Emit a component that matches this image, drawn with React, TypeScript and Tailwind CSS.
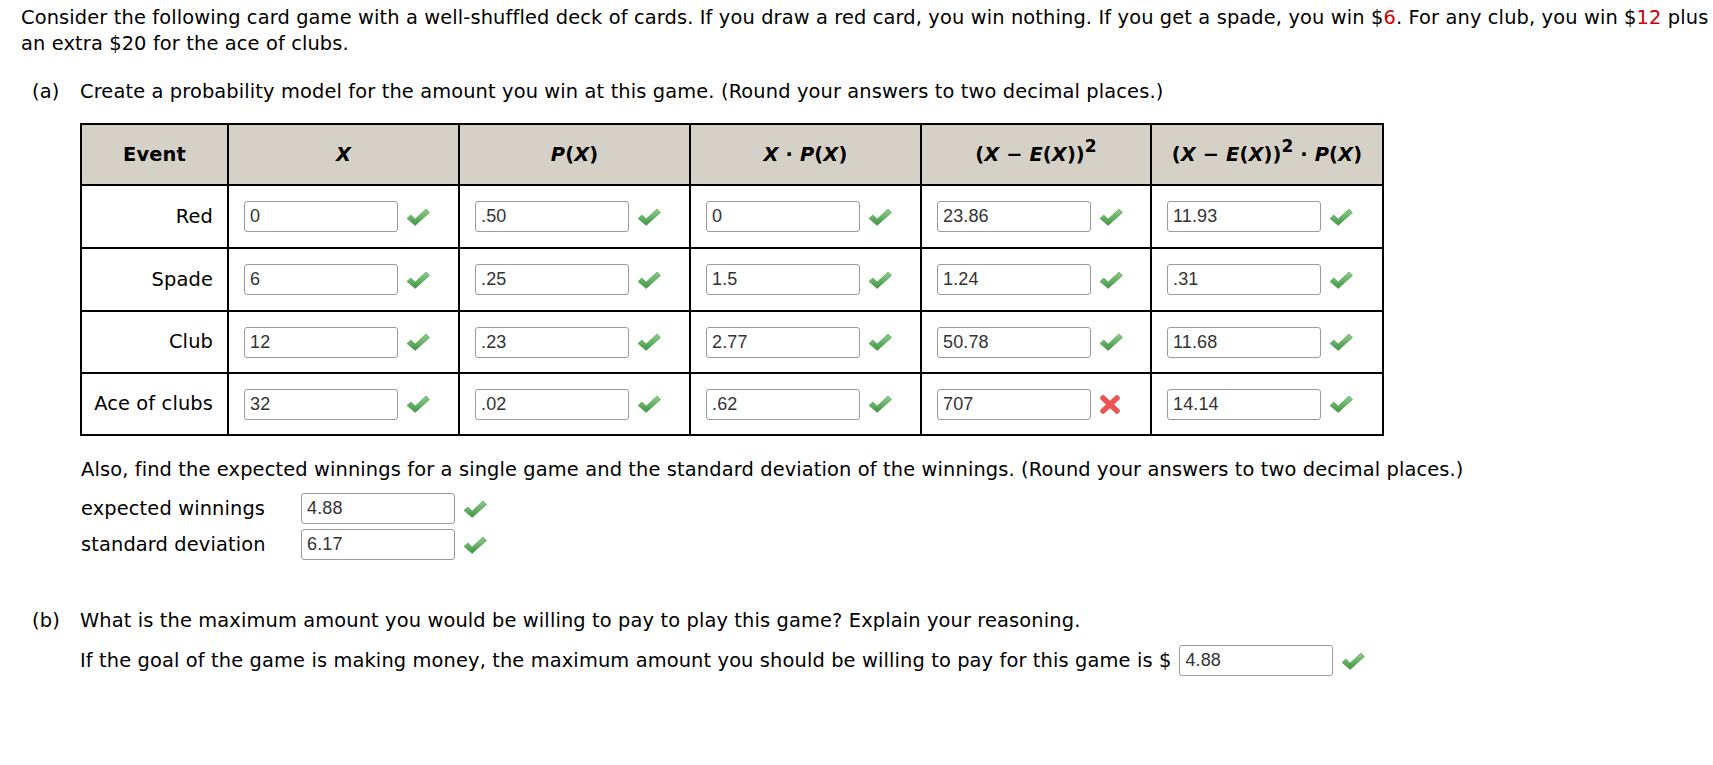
import React from "react";

type Cell = { value: string; ok: boolean };

const rows: { event: string; height: string; cells: Cell[] }[] = [
  {
    event: "Red",
    height: "h-[63px]",
    cells: [
      { value: "0", ok: true },
      { value: ".50", ok: true },
      { value: "0", ok: true },
      { value: "23.86", ok: true },
      { value: "11.93", ok: true },
    ],
  },
  {
    event: "Spade",
    height: "h-[63px]",
    cells: [
      { value: "6", ok: true },
      { value: ".25", ok: true },
      { value: "1.5", ok: true },
      { value: "1.24", ok: true },
      { value: ".31", ok: true },
    ],
  },
  {
    event: "Club",
    height: "h-[62px]",
    cells: [
      { value: "12", ok: true },
      { value: ".23", ok: true },
      { value: "2.77", ok: true },
      { value: "50.78", ok: true },
      { value: "11.68", ok: true },
    ],
  },
  {
    event: "Ace of clubs",
    height: "h-[62px]",
    cells: [
      { value: "32", ok: true },
      { value: ".02", ok: true },
      { value: ".62", ok: true },
      { value: "707", ok: false },
      { value: "14.14", ok: true },
    ],
  },
];

function Check() {
  return (
    <svg width="24" height="18" viewBox="0 0 24 18" className="shrink-0">
      <defs>
        <linearGradient id="chk" x1="0" y1="0" x2="0" y2="1">
          <stop offset="0" stopColor="#8fd08a" />
          <stop offset="1" stopColor="#3f9443" />
        </linearGradient>
      </defs>
      <path
        d="M1 10.5 L4.8 7 L9.2 11 L20 1 L23.5 4.5 L9.2 17.5 Z"
        fill="url(#chk)"
        stroke="#4b9a4c"
        strokeWidth="0.6"
        strokeLinejoin="round"
      />
    </svg>
  );
}

function Cross() {
  return (
    <svg width="22" height="21" viewBox="0 0 22 21" className="shrink-0">
      <g stroke="#ec5455" strokeWidth="5.5" strokeLinecap="round">
        <line x1="4" y1="4" x2="18" y2="17" />
        <line x1="18" y1="4" x2="4" y2="17" />
      </g>
    </svg>
  );
}

function Answer({ value, ok = true }: { value: string; ok?: boolean }) {
  return (
    <div className="flex items-center gap-[8px]">
      <input
        readOnly
        value={value}
        className="h-[31px] w-[154px] rounded-[3px] border border-[#9a9a9a] bg-white px-[5px] font-['Liberation_Sans',Arial,sans-serif] text-[18px] text-[#333] outline-none"
      />
      {ok ? <Check /> : <Cross />}
    </div>
  );
}

function X() {
  return <i>X</i>;
}

export default function App() {
  return (
    <div className="h-[765px] w-[1713px] overflow-hidden bg-white pl-[21px] pt-[5px] font-['DejaVu_Sans',Verdana,sans-serif] text-[19.4px] leading-[26px] tracking-[0.13px] text-black">
      <p className="whitespace-nowrap">
        Consider the following card game with a well-shuffled deck of cards. If you draw a red card, you win nothing. If
        you get a spade, you win $<span className="text-[#cc0000]">6</span>. For any club, you win $
        <span className="text-[#cc0000]">12</span> plus
        <br />
        an extra $20 for the ace of clubs.
      </p>

      <div className="mt-[22px] flex pl-[11px]">
        <div className="w-[48px] shrink-0">(a)</div>
        <div>
          <p>Create a probability model for the amount you win at this game. (Round your answers to two decimal places.)</p>

          <table className="mt-[18px] w-[1302px] table-fixed border-collapse border-2 border-black">
            <thead>
              <tr className="h-[61px] bg-[#d5d1c7] font-bold">
                <th className="w-[147px] border-2 border-black">Event</th>
                <th className="w-[231px] border-2 border-black">
                  <X />
                </th>
                <th className="w-[231px] border-2 border-black">
                  <i>P</i>(<X />)
                </th>
                <th className="w-[231px] border-2 border-black">
                  <X /> · <i>P</i>(<X />)
                </th>
                <th className="w-[230px] border-2 border-black">
                  (<X /> − <i>E</i>(<X />))<sup className="text-[17px]">2</sup>
                </th>
                <th className="w-[232px] border-2 border-black">
                  (<X /> − <i>E</i>(<X />))<sup className="text-[17px]">2</sup> · <i>P</i>(<X />)
                </th>
              </tr>
            </thead>
            <tbody>
              {rows.map((row) => (
                <tr key={row.event} className={row.height}>
                  <td className="border-2 border-black pr-[14px] text-right">{row.event}</td>
                  {row.cells.map((cell, i) => (
                    <td key={i} className="border-2 border-black pl-[15px]">
                      <Answer value={cell.value} ok={cell.ok} />
                    </td>
                  ))}
                </tr>
              ))}
            </tbody>
          </table>

          <p className="mt-[21px] pl-[1px]">
            Also, find the expected winnings for a single game and the standard deviation of the winnings. (Round your
            answers to two decimal places.)
          </p>
          <div className="mt-[10px] flex flex-col gap-[5px] pl-[1px]">
            <div className="flex items-center">
              <span className="w-[220px]">expected winnings</span>
              <Answer value="4.88" />
            </div>
            <div className="flex items-center">
              <span className="w-[220px]">standard deviation</span>
              <Answer value="6.17" />
            </div>
          </div>
        </div>
      </div>

      <div className="mt-[48px] flex pl-[11px]">
        <div className="w-[48px] shrink-0">(b)</div>
        <div>
          <p>What is the maximum amount you would be willing to pay to play this game? Explain your reasoning.</p>
          <div className="mt-[11px] flex items-center">
            <span>
              If the goal of the game is making money, the maximum amount you should be willing to pay for this game is $
            </span>
            <div className="ml-[8px]">
              <Answer value="4.88" />
            </div>
          </div>
        </div>
      </div>
    </div>
  );
}
